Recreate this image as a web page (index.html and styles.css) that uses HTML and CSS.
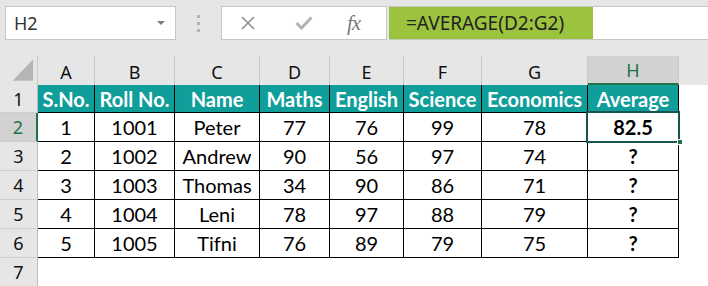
FILE: index.html
```html
<!DOCTYPE html>
<html>
<head>
<meta charset="utf-8">
<link rel="stylesheet" href="styles.css">
</head>
<body>
<div class="topbar">
  <div class="namebox"><span class="name">H2</span><span class="drop"></span></div>
  <div class="dots"><i></i><i></i><i></i></div>
  <div class="fxbox">
    <svg class="ico" width="18" height="14" viewBox="0 0 18 14"><path d="M3 1 L15 13 M15 1 L3 13" stroke="#8f8f8f" stroke-width="1.6" fill="none"/></svg>
    <svg class="ico chk" width="18" height="14" viewBox="0 0 18 14"><path d="M1.5 7 L6.5 12 L16.5 1.5" stroke="#b3b3b3" stroke-width="3" fill="none"/></svg>
    <span class="fx">fx</span>
  </div>
  <div class="formula"><span class="ftext">=AVERAGE(D2:G2)</span></div>
</div>
<div class="sheet">
  <div class="ch corner"><svg width="38" height="29" viewBox="0 0 38 29"><polygon points="13,25 34,25 34,3" fill="#b5b5b5"/></svg></div>
  <div class="ch">A</div><div class="ch">B</div><div class="ch">C</div><div class="ch">D</div><div class="ch">E</div><div class="ch">F</div><div class="ch">G</div><div class="ch sel">H</div><div class="ch last"></div>

  <div class="rh">1</div>
  <div class="th">S.No.</div><div class="th">Roll No.</div><div class="th">Name</div><div class="th">Maths</div><div class="th">English</div><div class="th">Science</div><div class="th">Economics</div><div class="th">Average</div><div class="e"></div>

  <div class="rh sel">2</div>
  <div class="td">1</div><div class="td">1001</div><div class="td">Peter</div><div class="td">77</div><div class="td">76</div><div class="td">99</div><div class="td">78</div><div class="td b active">82.5<span class="handle"></span></div><div class="e"></div>

  <div class="rh">3</div>
  <div class="td">2</div><div class="td">1002</div><div class="td">Andrew</div><div class="td">90</div><div class="td">56</div><div class="td">97</div><div class="td">74</div><div class="td b">?</div><div class="e"></div>

  <div class="rh">4</div>
  <div class="td">3</div><div class="td">1003</div><div class="td">Thomas</div><div class="td">34</div><div class="td">90</div><div class="td">86</div><div class="td">71</div><div class="td b">?</div><div class="e"></div>

  <div class="rh">5</div>
  <div class="td">4</div><div class="td">1004</div><div class="td">Leni</div><div class="td">78</div><div class="td">97</div><div class="td">88</div><div class="td">79</div><div class="td b">?</div><div class="e"></div>

  <div class="rh">6</div>
  <div class="td">5</div><div class="td">1005</div><div class="td">Tifni</div><div class="td">76</div><div class="td">89</div><div class="td">79</div><div class="td">75</div><div class="td b">?</div><div class="e"></div>

  <div class="rh">7</div>
</div>
</body>
</html>
```
FILE: styles.css
```css
* { box-sizing: border-box; }
html, body { margin: 0; padding: 0; background: #fff; overflow: hidden; }
body { width: 708px; height: 286px; }

.topbar {
  height: 56px;
  background: #e6e6e6;
  display: flex;
  align-items: flex-start;
  padding-top: 6px;
  padding-left: 5px;
}
.namebox {
  width: 171px;
  height: 34px;
  background: #fff;
  border: 1px solid #c6c6c6;
  display: flex;
  align-items: center;
  justify-content: space-between;
  padding: 0 10px 0 8px;
}
.name {
  font-family: "Noto Sans", sans-serif;
  font-size: 18px;
  color: #333;
}
.drop {
  width: 0; height: 0;
  border-left: 4px solid transparent;
  border-right: 4px solid transparent;
  border-top: 4px solid #7a7a7a;
}
.dots {
  width: 45px;
  height: 34px;
  display: flex;
  flex-direction: column;
  align-items: center;
  justify-content: center;
  gap: 4px;
}
.dots i { display: block; width: 3px; height: 3px; background: #b4b4b4; }
.fxbox {
  width: 166px;
  height: 34px;
  background: #fff;
  border: 1px solid #c6c6c6;
  display: flex;
  align-items: center;
  padding-left: 17px;
}
.ico { display: block; }
.chk { margin-left: 38px; }
.fx {
  margin-left: 34px;
  font-family: "Liberation Serif", serif;
  font-style: italic;
  font-size: 21px;
  color: #7a7a7a;
  letter-spacing: -1px;
}
.formula {
  margin-left: 2px;
  flex: 1;
  height: 34px;
  background: #fff;
  border-top: 1px solid #c6c6c6;
  border-bottom: 1px solid #c6c6c6;
  display: flex;
}
.ftext {
  width: 204px;
  height: 100%;
  background: #9bc33d;
  font-family: "Noto Sans", sans-serif;
  font-size: 19px;
  color: #222;
  padding-left: 17px;
  display: flex;
  align-items: center;
}

.sheet {
  display: grid;
  grid-template-columns: 38px 57px 80px 85px 70px 74px 78px 106px 91px 1fr;
  grid-template-rows: 29px 28px 29px 29px 29px 29px 29px 29px;
}
.ch {
  background: #e6e6e6;
  border-right: 1px solid #c8c8c8;
  font-family: "Noto Sans", sans-serif;
  font-size: 18px;
  color: #111;
  display: flex;
  align-items: center;
  justify-content: center;
  padding-top: 2px;
}
.ch.corner { padding: 0; align-items: stretch; justify-content: flex-start; }
.ch.corner svg { display: block; }
.ch.last { border-right: none; }
.ch.sel {
  background: #d2d2d2;
  color: #217346;
  border-bottom: 2px solid #217346;
  padding-top: 1px;
}
.rh {
  grid-column: 1;
  background: #e6e6e6;
  border-bottom: 1px solid #cdcdcd;
  border-right: 1px solid #bdbdbd;
  font-family: "Noto Sans", sans-serif;
  font-size: 18px;
  color: #111;
  display: flex;
  align-items: center;
  justify-content: center;
}
.rh.sel {
  background: #d2d2d2;
  color: #217346;
  border-right: 2px solid #217346;
}
.th, .td {
  border-right: 1px solid #000;
  border-bottom: 1px solid #000;
  font-family: "Lato", sans-serif;
  font-size: 20px;
  display: flex;
  align-items: center;
  justify-content: center;
  white-space: nowrap;
}
.th {
  background: #0f9e9a;
  color: #fff;
  font-weight: 700;
}
.td { background: #fff; color: #000; }
.td.b { font-weight: 700; }
.td.active { position: relative; }
.td.active::before {
  content: "";
  position: absolute;
  left: -2px; top: -2px; right: -2px; bottom: -2px;
  border: 2px solid #17554f;
}
.handle {
  position: absolute;
  right: -5px;
  bottom: -4px;
  width: 6px;
  height: 6px;
  background: #217346;
  border: 1px solid #fff;
}
.e { background: #fff; }
```
